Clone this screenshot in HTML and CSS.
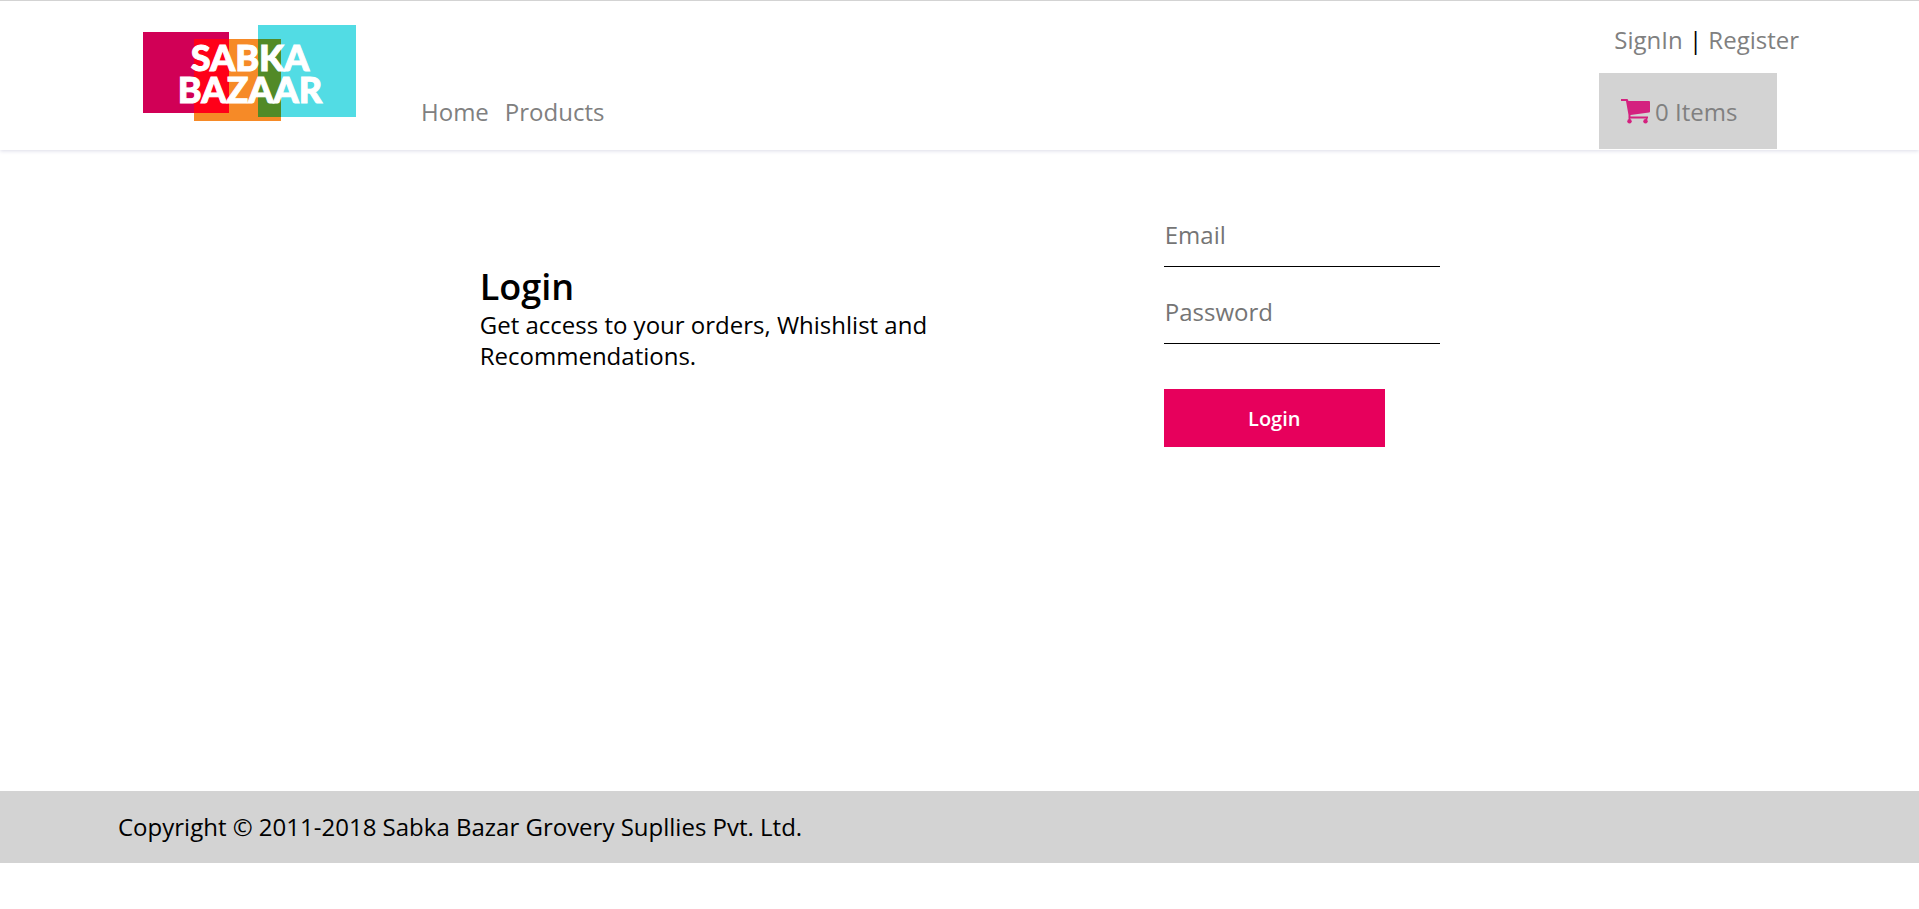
FILE: index.html
```html
<!DOCTYPE html>
<html lang="en">
<head>
<meta charset="utf-8">
<meta name="viewport" content="width=device-width, initial-scale=1">
<title>Sabka Bazaar - Login</title>
<link rel="stylesheet" href="styles.css">
</head>
<body>
<header class="header">
  <a class="logo" href="#" aria-label="Sabka Bazaar">
    <svg class="logo-image" viewBox="0 0 213 96" aria-hidden="true">
      <rect x="0" y="7" width="86" height="81" fill="#d10056"/>
      <rect x="51" y="14" width="87" height="82" fill="#f68a27"/>
      <rect x="115" y="0" width="98" height="92" fill="#52dce4"/>
      <rect x="51" y="14" width="35" height="74" fill="#ff0018"/>
      <rect x="115" y="14" width="23" height="78" fill="#528a27"/>
      <text class="logo-text" x="107" y="46">SABKA</text>
      <text class="logo-text" x="107" y="78">BAZAAR</text>
    </svg>
  </a>
  <nav class="nav">
    <a class="link" href="#">Home</a>
    <a class="link" href="#">Products</a>
  </nav>
  <div class="account">
    <div class="account-links">
      <a class="link" href="#">SignIn</a> | <a class="link" href="#">Register</a>
    </div>
    <button class="cart" type="button">
      <svg class="cart-icon" viewBox="0 0 30 26" aria-hidden="true">
        <path fill="#d4217f" d="M0 1H6.500L7.500 3H28Q29 3 29 4V13.500Q29 14.500 28 14.500L9.500 17V18.500H27V20.500H7.500V17L5 3H0Z"/>
        <path fill="none" stroke="#d4217f" stroke-width="1.500" d="M8.500 20V22M25.500 20V22"/>
        <circle cx="8.500" cy="23.200" r="2.200" fill="#d4217f"/>
        <circle cx="24.500" cy="23.200" r="2.200" fill="#d4217f"/>
      </svg>
      <span>0 Items</span>
    </button>
  </div>
</header>
<main class="main">
  <section class="intro">
    <h1 class="title">Login</h1>
    <p class="description">Get access to your orders, Whishlist and Recommendations.</p>
  </section>
  <form class="form">
    <input class="field" type="email" placeholder="Email" aria-label="Email">
    <input class="field" type="password" placeholder="Password" aria-label="Password">
    <button class="submit" type="submit">Login</button>
  </form>
</main>
<footer class="footer">Copyright © 2011-2018 Sabka Bazar Grovery Supllies Pvt. Ltd.</footer>
</body>
</html>
```
FILE: styles.css
```css
* {
  box-sizing: border-box;
}

body {
  margin: 0;
  background: #fff;
  color: #000;
  font-family: "Open Sans", "Noto Sans", sans-serif;
  font-size: 24px;
  line-height: 31px;
}

button,
input {
  font: inherit;
}

.header {
  display: flex;
  align-items: stretch;
  min-height: 150px;
  padding-left: 143px;
  border-top: 1px solid #d3d3d3;
  box-shadow: 0 1px 4px #dcdce8;
}

.logo {
  padding-top: 24px;
}

.logo-image {
  display: block;
  width: 213px;
}

.logo-text {
  fill: #fff;
  stroke: #fff;
  stroke-width: 1px;
  font-family: Lato, "Open Sans", sans-serif;
  font-size: 36px;
  font-weight: 900;
  line-height: 32px;
  text-anchor: middle;
}

.link {
  color: #808080;
  text-decoration: none;
}

.nav {
  display: flex;
  align-items: flex-end;
  gap: 16px;
  margin-left: 65px;
  padding-bottom: 23px;
}

.account {
  display: flex;
  flex-direction: column;
  align-items: flex-end;
  justify-content: space-between;
  margin-left: auto;
  padding: 23px 120px 1px 0;
}

.cart {
  display: flex;
  align-items: center;
  gap: 4px;
  width: 178px;
  height: 76px;
  margin-right: 22px;
  padding: 0 22px;
  border: 0;
  background: #d3d3d3;
  color: #808080;
}

.cart-icon {
  width: 30px;
}

.main {
  display: grid;
  grid-template-columns: 456px 276px;
  justify-content: start;
  column-gap: 228px;
  min-height: 641px;
  padding: 60px 0 0 25%;
}

.intro {
  padding-top: 55px;
}

.title {
  margin: 0;
  font-size: 36px;
  font-weight: 600;
  line-height: 44px;
}

.description {
  margin: 0;
}

.form {
  display: flex;
  flex-direction: column;
  align-items: flex-start;
}

.field {
  width: 100%;
  height: 57px;
  margin-bottom: 20px;
  padding: 0 0 8px 1px;
  border: 0;
  border-bottom: 1px solid #000;
  outline: 0;
}

.field::placeholder {
  color: #757575;
}

.submit {
  width: 221px;
  height: 58px;
  margin-top: 25px;
  border: 0;
  background: #e7005c;
  color: #fff;
  font-size: 20px;
  font-weight: 600;
}

.footer {
  min-height: 72px;
  padding: 20px 118px;
  background: #d3d3d3;
}
```
